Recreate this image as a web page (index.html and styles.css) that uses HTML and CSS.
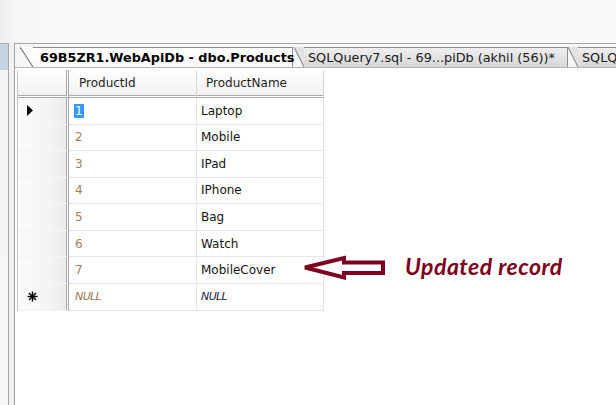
FILE: index.html
```html
<!DOCTYPE html>
<html>
<head>
<meta charset="utf-8">
<link rel="stylesheet" href="styles.css">
</head>
<body>
<div class="top"></div>
<div class="main">
  <div class="side"></div>
  <div class="gap"></div>
  <div class="doc">
    <div class="tabs">
      <div class="tab active"><span class="slant"></span><span class="tab-body">69B5ZR1.WebApiDb - dbo.Products</span></div>
      <div class="tab second"><span class="slant"></span><span class="tab-body">SQLQuery7.sql - 69...piDb (akhil (56))*</span></div>
      <div class="tab third"><span class="slant"></span><span class="tab-body">SQLQ</span></div>
    </div>
    <div class="content">
      <div class="grid">
        <div class="rh hdr"></div>
        <div class="hc">ProductId</div>
        <div class="hc">ProductName</div>

        <div class="rh"><svg class="cur" width="6" height="11" viewBox="0 0 6 11"><path d="M0 0 L6 5.5 L0 11 Z" fill="#000"/></svg></div>
        <div class="c id"><span class="sel">1</span></div>
        <div class="c nm">Laptop</div>

        <div class="rh"></div><div class="c id">2</div><div class="c nm">Mobile</div>
        <div class="rh"></div><div class="c id">3</div><div class="c nm">IPad</div>
        <div class="rh"></div><div class="c id">4</div><div class="c nm">IPhone</div>
        <div class="rh"></div><div class="c id">5</div><div class="c nm">Bag</div>
        <div class="rh"></div><div class="c id">6</div><div class="c nm">Watch</div>
        <div class="rh"></div><div class="c id">7</div><div class="c nm">MobileCover</div>

        <div class="rh"><svg class="star" width="11" height="11" viewBox="0 0 11 11"><g stroke="#000" stroke-width="1.4"><line x1="5.5" y1="0.5" x2="5.5" y2="10.5"/><line x1="0.5" y1="5.5" x2="10.5" y2="5.5"/><line x1="2" y1="2" x2="9" y2="9"/><line x1="9" y1="2" x2="2" y2="9"/></g></svg></div>
        <div class="c id null">NULL</div>
        <div class="c nm null">NULL</div>
      </div>
      <div class="note">
        <svg class="arrow" width="88" height="31" viewBox="0 0 88 31"><path d="M5 15.5 L44 6 L44 10.5 L83 10.5 L83 21 L44 21 L44 25.5 Z" fill="#fff" stroke="#7e0020" stroke-width="4" stroke-linejoin="miter"/></svg>
        <span class="note-text">Updated record</span>
      </div>
    </div>
  </div>
</div>
</body>
</html>
```
FILE: styles.css
```css
* { box-sizing: border-box; }
html, body { margin: 0; padding: 0; }
body {
  width: 616px;
  height: 405px;
  overflow: hidden;
  background: #f8f8f8;
  font-family: "DejaVu Sans", sans-serif;
}
.top {
  height: 43px;
  background: linear-gradient(to right, #efefef 0, #f6f6f6 22px, #f9f9f9 60px, #f9f9f9);
}
.main {
  display: flex;
  height: 362px;
}
.side {
  width: 9px;
  border-top: 1px solid #a9b1bb;
  border-right: 1px solid #a6a6a6;
  background: linear-gradient(#c6d3e1 0, #c6d3e1 26px, #f3f3f3 26px, #f7f7f7);
}
.gap {
  width: 5px;
  background: #f2f2f2;
}
.doc {
  flex: 1;
  display: flex;
  flex-direction: column;
  border-left: 1px solid #a0a0a0;
  border-top: 1px solid #a5a5a5;
  background: #fff;
  min-width: 0;
}
.tabs {
  height: 24px;
  padding-top: 3px;
  padding-left: 5px;
  display: flex;
  background: #f6f6f6;
  border-bottom: 1px solid #b4b4b4;
  overflow: hidden;
  white-space: nowrap;
}
.tab {
  display: flex;
  flex: none;
  height: 20px;
}
.slant {
  width: 13px;
  height: 20px;
  flex: none;
  background: linear-gradient(to top right, transparent calc(50% - 0.9px), #8e8e8e calc(50% - 0.4px), #8e8e8e calc(50% + 0.4px), #fdfdfd calc(50% + 0.9px));
}
.tab-body {
  display: block;
  height: 20px;
  border-top: 1px solid #8e8e8e;
  border-right: 1px solid #8e8e8e;
  line-height: 19px;
  font-size: 12.8px;
  color: #000;
}
.active .tab-body {
  width: 260px;
  padding-left: 7px;
  font-weight: bold;
  background: linear-gradient(#ffffff, #f8f8f8);
}
.second .slant, .third .slant {
  width: 10px;
  background: linear-gradient(to top right, transparent calc(50% - 0.9px), #9a9a9a calc(50% - 0.4px), #9a9a9a calc(50% + 0.4px), #e2e2e2 calc(50% + 0.9px));
}
.second .slant { margin-left: 1px; }
.second .tab-body, .third .tab-body {
  background: linear-gradient(#efefef, #d7d7d7);
  color: #1a1a1a;
}
.second .tab-body {
  width: 264px;
  padding-left: 4px;
}
.third .tab-body {
  width: 38px;
  padding-left: 4px;
  border-right: none;
}
.content {
  position: relative;
  flex: 1;
  padding-left: 2px;
  padding-top: 2px;
  background: #fff;
}
.grid {
  display: grid;
  grid-template-columns: 51px 128px 127px;
  grid-template-rows: 28px;
  grid-auto-rows: 26.57px;
  width: 306px;
  border-left: 1px solid #c4c4c4;
  font-size: 12px;
  line-height: 14px;
}
.rh {
  display: flex;
  align-items: center;
  padding-left: 9px;
  border-right: 3px double #a9a9a9;
  border-bottom: 1px solid #f4f4f4;
  background: linear-gradient(to right, #fcfcfc, #f3f3f3 70%, #ebebeb);
}
.rh.hdr {
  border-bottom: 3px double #a9a9a9;
  background: linear-gradient(#ffffff, #f1f1f1);
}
.hc {
  display: flex;
  align-items: center;
  padding-left: 10px;
  border-right: 1px solid #d6d6d6;
  border-bottom: 3px double #a9a9a9;
  background: linear-gradient(#ffffff, #f1f1f1);
  color: #1d1d1d;
}
.hc + .hc { padding-left: 9px; }
.c {
  display: flex;
  align-items: center;
  border-right: 1px solid #e6e6e6;
  border-bottom: 1px solid #e6e6e6;
}
.id {
  padding-left: 6px;
  color: #a07e5c;
}
.nm {
  padding-left: 4px;
  color: #141414;
}
.null { font-style: italic; font-size: 11px; letter-spacing: -0.6px; }
.id.null { color: #9a7452; }
.nm.null { color: #1a1a46; }
.sel {
  background: #3399ff;
  color: #fff;
  padding: 0 1px;
  margin-left: -1px;
}
.note {
  position: absolute;
  left: 285px;
  top: 184px;
  display: flex;
  align-items: center;
}
.arrow { display: block; flex: none; }
.note-text {
  margin-left: 17px;
  margin-top: -4px;
  font-family: "Lato", sans-serif;
  font-weight: bold;
  font-style: italic;
  font-size: 23px;
  letter-spacing: 0.5px;
  line-height: 26px;
  color: #7e0020;
}
```
